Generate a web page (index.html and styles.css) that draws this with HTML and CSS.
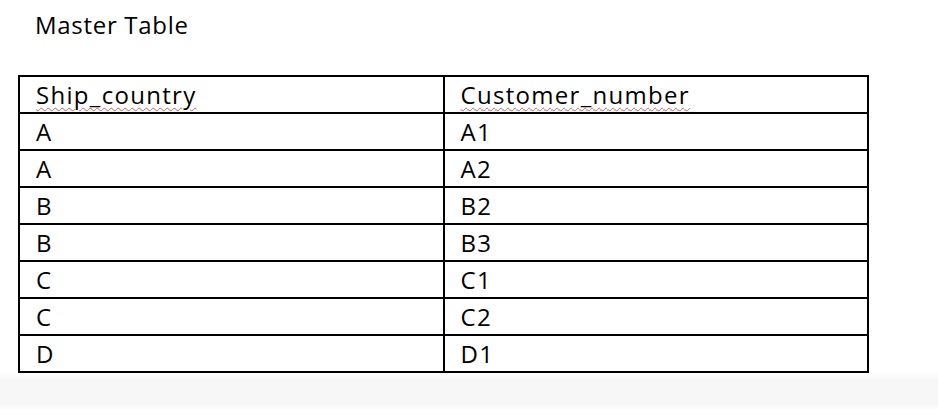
FILE: index.html
```html
<!DOCTYPE html>
<html>
<head>
<meta charset="utf-8">
<link rel="stylesheet" href="styles.css">
</head>
<body>
<div class="page">
  <h1 class="title">Master Table</h1>
  <table class="master">
    <tr><td><span class="spell">Ship_country</span></td><td><span class="spell">Customer_number</span></td></tr>
    <tr><td>A</td><td>A1</td></tr>
    <tr><td>A</td><td>A2</td></tr>
    <tr><td>B</td><td>B2</td></tr>
    <tr><td>B</td><td>B3</td></tr>
    <tr><td>C</td><td>C1</td></tr>
    <tr><td>C</td><td>C2</td></tr>
    <tr><td>D</td><td>D1</td></tr>
  </table>
</div>
</body>
</html>
```

FILE: styles.css
```css
html, body {
  margin: 0;
  padding: 0;
  background: #ffffff;
}
.page {
  width: 938px;
  height: 414px;
  box-sizing: border-box;
  padding-top: 8px;
  font-family: "Open Sans", "Lato", sans-serif;
  color: #000;
  background: linear-gradient(to bottom, #ffffff 0, #ffffff 372px, #f7f7f7 380px, #f7f7f7 405px, #ffffff 410px);
}
.title {
  margin: 0 0 0 35px;
  font-size: 24px;
  font-weight: 400;
  letter-spacing: 0.7px;
  line-height: 34px;
  height: 67px;
}
.master {
  margin-left: 18px;
  width: 851px;
  border-collapse: collapse;
  table-layout: fixed;
}
.master td {
  border: 2px solid #000;
  height: 35px;
  padding: 0 0 0 16px;
  box-sizing: border-box;
  font-size: 24px;
  letter-spacing: 1.3px;
  line-height: 35px;
  vertical-align: middle;
  width: 50%;
}
.spell {
  text-decoration: underline wavy #d06060;
  text-decoration-thickness: 1px;
  text-underline-offset: 3px;
}
```
